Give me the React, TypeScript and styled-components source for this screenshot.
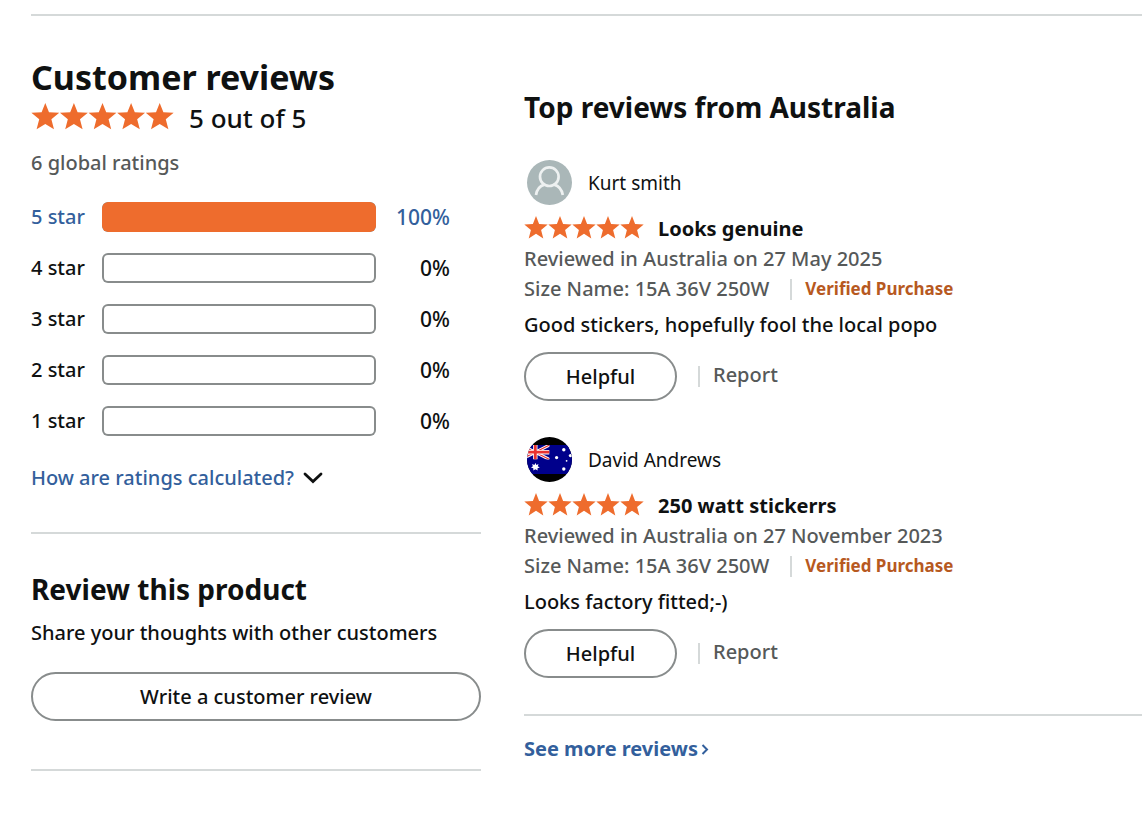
import React from "react";
import styled, { createGlobalStyle } from "styled-components";

const color = {
  text: "#0f1111",
  muted: "#565959",
  link: "#335f9c",
  orange: "#ee6c2d",
  verified: "#b7591f",
  border: "#888c8c",
  rule: "#d5d9d9",
};

const GlobalStyle = createGlobalStyle`
  *, *::before, *::after { box-sizing: border-box; }
  body {
    margin: 0;
    background: #fff;
    color: ${color.text};
    font-family: "Noto Sans", "Open Sans", sans-serif;
    font-size: 20px;
    font-weight: 500;
    line-height: 30px;
  }
  h1, h2, h3, p, ul { margin: 0; padding: 0; }
  ul { list-style: none; }
  button { font: inherit; color: inherit; cursor: pointer; }
  a { text-decoration: none; }
`;

const Page = styled.main`
  padding: 14px 0 48px 31px;
`;

const Rule = styled.hr<{ $top?: number }>`
  border: 0;
  height: 2px;
  margin: ${(p) => p.$top ?? 0}px 0 0;
  background: ${color.rule};
`;

const Columns = styled.div`
  display: grid;
  grid-template-columns: 450px minmax(0, 1fr);
  column-gap: 43px;
  align-items: start;
`;

const Summary = styled.section`
  padding-top: 37px;
`;

const Reviews = styled.section`
  padding-top: 71px;
`;

const PageTitle = styled.h1`
  font-size: 34px;
  line-height: 48px;
  font-weight: 700;
  white-space: nowrap;
`;

const SectionTitle = styled.h2`
  font-size: 28px;
  line-height: 40px;
  font-weight: 700;
`;

const Score = styled.div`
  display: flex;
  align-items: flex-start;
  gap: 15px;
  font-size: 26px;
  line-height: 34px;

  svg { margin-top: 2px; }
`;

const RatingCount = styled.p`
  margin-top: 13px;
  color: ${color.muted};
`;

const Histogram = styled.ul`
  display: grid;
  row-gap: 21px;
  margin-top: 24px;
  padding-right: 31px;
`;

const HistogramRow = styled.li<{ $linked: boolean }>`
  display: grid;
  grid-template-columns: 71px 1fr 74px;
  height: 30px;
  color: ${(p) => (p.$linked ? color.link : color.text)};
`;

const Percent = styled.span`
  font-size: 21px;
  text-align: right;
`;

const Meter = styled.span`
  display: block;
  overflow: hidden;
  border-radius: 6px;
  box-shadow: inset 0 0 0 2px ${color.border};
`;

const MeterFill = styled.span`
  display: block;
  height: 100%;
  border-radius: 6px;
  background: ${color.orange};
`;

const Expander = styled.button`
  display: flex;
  align-items: center;
  gap: 9px;
  margin-top: 27px;
  padding: 0;
  border: 0;
  background: none;
  && { color: ${color.link}; }
`;

const Prompt = styled.div`
  padding-top: 35px;
`;

const PromptText = styled.p`
  margin: 9px 0 24px;
`;

const PillButton = styled.button<{ $wide?: boolean }>`
  width: ${(p) => (p.$wide ? "100%" : "153px")};
  height: 49px;
  padding: 0;
  border: 2px solid ${color.border};
  border-radius: 25px;
  background: #fff;
`;

const ReviewList = styled.ul`
  display: grid;
  row-gap: 36px;
  margin-top: 33px;
`;

const Profile = styled.div`
  display: flex;
  align-items: center;
  gap: 16px;
  height: 45px;
  padding-left: 3px;
  font-size: 19px;
  font-weight: 400;
`;

const Headline = styled.div`
  display: flex;
  align-items: flex-start;
  gap: 14px;
  margin-top: 9px;

  svg { margin-top: 2px; }
`;

const ReviewTitle = styled.h3`
  font-size: 20px;
  line-height: 30px;
  font-weight: 700;
`;

const Meta = styled.div`
  display: flex;
  align-items: center;
  color: ${color.muted};
`;

const Separator = styled.span`
  width: 2px;
  height: 21px;
  margin: 0 13px 0 21px;
  background: ${color.rule};
`;

const Verified = styled.span`
  color: ${color.verified};
  font-size: 17px;
  font-weight: 700;
`;

const ReviewBody = styled.p`
  margin: 6px 0 12px;
`;

const Actions = styled.div`
  display: flex;
  align-items: center;
`;

const ReportLink = styled.a`
  color: ${color.muted};
  padding-bottom: 3px;
`;

const MoreLink = styled.a`
  display: inline-flex;
  align-items: center;
  gap: 3px;
  margin-top: 18px;
  color: ${color.link};
  font-weight: 700;
`;

function Stars({ width, height }: { width: number; height: number }) {
  return (
    <svg width={width} height={height} viewBox="0 0 120 23" role="img" aria-label="5 out of 5 stars" preserveAspectRatio="none">
      {[0, 24, 48, 72, 96].map((x) => (
        <path
          key={x}
          transform={`translate(${x} 0)`}
          d="M12 0 L15.1 7.9 L23.7 8.4 L17.1 13.9 L19.3 22.4 L12 17.8 L4.7 22.4 L6.9 13.9 L.3 8.4 L8.9 7.9 Z"
          fill={color.orange}
        />
      ))}
    </svg>
  );
}

function PersonAvatar() {
  return (
    <svg width="45" height="45" viewBox="0 0 45 45" aria-hidden="true">
      <circle cx="22.5" cy="22.5" r="22.5" fill="#aab7b8" />
      <g fill="none" stroke="#eef1f1" strokeWidth="2.7">
        <circle cx="22.3" cy="16.7" r="9.3" />
        <path d="M9 35 C9.8 29.5 12.7 26 17.4 24.6 M27.2 24.6 C31.9 26 34.8 29.5 35.8 35" />
      </g>
    </svg>
  );
}

function FlagAvatar() {
  return (
    <svg width="45" height="45" viewBox="0 0 45 45" aria-hidden="true">
      <defs>
        <clipPath id="round">
          <circle cx="22.5" cy="22.5" r="22.5" />
        </clipPath>
        <clipPath id="canton">
          <rect x="0" y="8" width="22.5" height="14.5" />
        </clipPath>
      </defs>
      <g clipPath="url(#round)">
        <rect width="45" height="45" fill="#000" />
        <rect y="8" width="45" height="29" fill="#00008b" />
        <g clipPath="url(#canton)">
          <path d="M-6 8 L22.5 22.5 M-6 22.5 L22.5 8" stroke="#fff" strokeWidth="3" />
          <path d="M-6 8 L22.5 22.5 M-6 22.5 L22.5 8" stroke="#e8322f" strokeWidth="1.2" />
          <path d="M8.3 8 V22.5 M0 15.2 H22.5" stroke="#fff" strokeWidth="4.4" />
          <path d="M8.3 8 V22.5 M0 15.2 H22.5" stroke="#e8322f" strokeWidth="2.8" />
        </g>
        <g fill="#fff">
          <path d="M8.3 25.7 L9.3 28 L11.5 27 L10.8 29.3 L12.8 30.5 L10.5 31.2 L10.6 33.6 L8.4 32.2 L6.4 33.6 L6.3 31.2 L4 30.5 L5.9 29.2 L5.1 27 L7.5 28 Z" />
          <circle cx="36.8" cy="12.8" r="1.7" />
          <circle cx="29.6" cy="20.6" r="1.6" />
          <circle cx="43.5" cy="18.6" r="1.7" />
          <circle cx="36.8" cy="32" r="1.7" />
          <circle cx="39.6" cy="23.8" r="0.9" />
        </g>
      </g>
    </svg>
  );
}

const histogram = [
  { stars: 5, percent: 100 },
  { stars: 4, percent: 0 },
  { stars: 3, percent: 0 },
  { stars: 2, percent: 0 },
  { stars: 1, percent: 0 },
];

const reviews = [
  {
    name: "Kurt smith",
    avatar: <PersonAvatar />,
    title: "Looks genuine",
    date: "Reviewed in Australia on 27 May 2025",
    body: "Good stickers, hopefully fool the local popo",
  },
  {
    name: "David Andrews",
    avatar: <FlagAvatar />,
    title: "250 watt stickerrs",
    date: "Reviewed in Australia on 27 November 2023",
    body: "Looks factory fitted;-)",
  },
];

export default function App() {
  return (
    <>
      <GlobalStyle />
      <Page>
        <Rule />
        <Columns>
          <Summary>
            <PageTitle>Customer reviews</PageTitle>
            <Score>
              <Stars width={143} height={27} />
              <span>5 out of 5</span>
            </Score>
            <RatingCount>6 global ratings</RatingCount>
            <Histogram>
              {histogram.map(({ stars, percent }) => (
                <HistogramRow key={stars} $linked={percent > 0}>
                  <span>{stars} star</span>
                  <Meter>
                    <MeterFill style={{ width: `${percent}%` }} />
                  </Meter>
                  <Percent>{percent}%</Percent>
                </HistogramRow>
              ))}
            </Histogram>
            <Expander type="button">
              How are ratings calculated?
              <svg width="20" height="12" viewBox="0 0 20 12" fill="none" aria-hidden="true">
                <path d="M2 2 L10 9.5 L18 2" stroke={color.text} strokeWidth="2.8" strokeLinecap="round" />
              </svg>
            </Expander>
            <Rule $top={39} />
            <Prompt>
              <SectionTitle>Review this product</SectionTitle>
              <PromptText>Share your thoughts with other customers</PromptText>
              <PillButton type="button" $wide>
                Write a customer review
              </PillButton>
            </Prompt>
            <Rule $top={48} />
          </Summary>
          <Reviews>
            <SectionTitle>Top reviews from Australia</SectionTitle>
            <ReviewList>
              {reviews.map((review) => (
                <li key={review.name}>
                  <Profile>
                    {review.avatar}
                    <span>{review.name}</span>
                  </Profile>
                  <Headline>
                    <Stars width={120} height={23} />
                    <ReviewTitle>{review.title}</ReviewTitle>
                  </Headline>
                  <Meta>{review.date}</Meta>
                  <Meta>
                    <span>Size Name: 15A 36V 250W</span>
                    <Separator />
                    <Verified>Verified Purchase</Verified>
                  </Meta>
                  <ReviewBody>{review.body}</ReviewBody>
                  <Actions>
                    <PillButton type="button">Helpful</PillButton>
                    <Separator />
                    <ReportLink href="#report">Report</ReportLink>
                  </Actions>
                </li>
              ))}
            </ReviewList>
            <Rule $top={36} />
            <MoreLink href="#reviews">
              See more reviews
              <svg width="8" height="12" viewBox="0 0 8 12" fill="none" aria-hidden="true">
                <path d="M1.5 2 L6 6.5 L1.5 11" stroke={color.link} strokeWidth="2" />
              </svg>
            </MoreLink>
          </Reviews>
        </Columns>
      </Page>
    </>
  );
}
